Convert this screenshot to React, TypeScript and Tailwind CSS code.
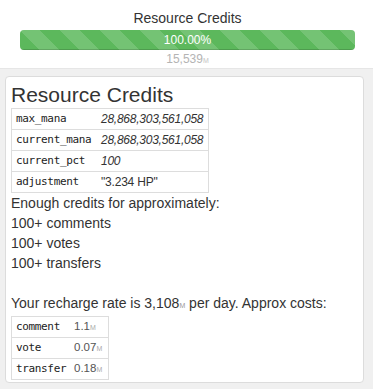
import React from "react";

const sans = { fontFamily: '"Liberation Sans", Arial, sans-serif' };
const mono = { fontFamily: '"DejaVu Sans Mono", "Liberation Mono", monospace' };

function M({ className = "" }: { className?: string }) {
  return <span className={`text-[7px] ${className}`}>M</span>;
}

const stats: [string, string, boolean][] = [
  ["max_mana", "28,868,303,561,058", true],
  ["current_mana", "28,868,303,561,058", true],
  ["current_pct", "100", true],
  ["adjustment", '"3.234 HP"', false],
];

const costs: [string, string][] = [
  ["comment", "1.1"],
  ["vote", "0.07"],
  ["transfer", "0.18"],
];

export default function App() {
  return (
    <div className="w-[373px] h-[389px] overflow-hidden bg-[#f0f0f0] text-[#333]" style={sans}>
      <div className="bg-white h-[69px] pt-[8px] pl-[20px] pr-[18px] border-b border-[#e6e6e6]">
        <div className="text-[14px] leading-[20px] text-center text-[#333]">Resource Credits</div>
        <div className="mt-[2px] h-[20px] rounded-[4px] bg-[#f5f5f5] overflow-hidden">
          <div className="h-full w-full bg-[#5cb85c] bg-[linear-gradient(45deg,rgba(255,255,255,.15)_25%,transparent_25%,transparent_50%,rgba(255,255,255,.15)_50%,rgba(255,255,255,.15)_75%,transparent_75%,transparent)] bg-[length:40px_40px] shadow-[inset_0_-1px_0_rgba(0,0,0,0.15)] text-white text-[12px] leading-[20px] text-center">
            100.00%
          </div>
        </div>
        <div className="text-[12px] leading-[18px] text-center text-[#b4b4b4]">
          15,539<M className="text-[#c4c4c4]" />
        </div>
      </div>
      <div className="ml-[5px] mt-[7px] w-[359px] bg-white border border-[#dcdcdc] rounded-[4px] px-[5px] pt-[5px] pb-[2px]">
        <div className="text-[21px] leading-[26px] text-[#333]">Resource Credits</div>
        <div className="w-[198px] border border-[#ddd]">
          {stats.map(([k, v, it], i) => (
            <div
              key={k}
              className={`flex items-center h-[20px] ${i < stats.length - 1 ? "border-b border-[#ddd]" : ""} box-content`}
            >
              <div className="w-[89px] pl-[4px] text-[11px] tracking-[-0.35px] text-[#222]" style={mono}>
                {k}
              </div>
              <div className={`text-[12px] ${it ? "italic tracking-[-0.25px]" : "tracking-[-0.2px]"} text-[#333]`}>{v}</div>
            </div>
          ))}
        </div>
        <div className="text-[14px] leading-[20px] text-[#333]">
          <div>Enough credits for approximately:</div>
          <div>100+ comments</div>
          <div>100+ votes</div>
          <div>100+ transfers</div>
          <div className="h-[20px]" />
          <div>
            Your recharge rate is 3,108<M className="text-[#999]" /> per day. Approx costs:
          </div>
        </div>
        <div className="w-[98px] border border-[#ddd]">
          {costs.map(([k, v], i) => (
            <div
              key={k}
              className={`flex items-center h-[20px] ${i < costs.length - 1 ? "border-b border-[#ddd]" : ""} box-content`}
            >
              <div className="w-[62px] pl-[4px] text-[11px] tracking-[-0.35px] text-[#222]" style={mono}>
                {k}
              </div>
              <div className="text-[11.5px] text-[#555]">
                {v}
                <M className="text-[#aaa]" />
              </div>
            </div>
          ))}
        </div>
      </div>
    </div>
  );
}
